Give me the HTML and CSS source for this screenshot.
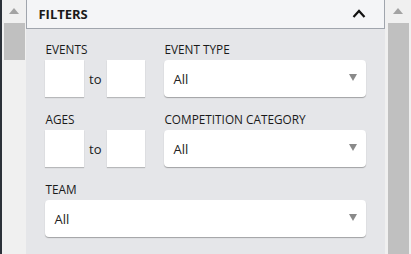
FILE: index.html
```html
<!DOCTYPE html>
<html lang="en">
<head>
    <meta charset="UTF-8" />
    <meta name="viewport" content="width=device-width, initial-scale=1.0" />
    <title>Filters</title>
    <link rel="stylesheet" href="styles.css">
</head>
<body>
    <div class="edge"></div>
    <div class="scrollbar left">
        <span class="arrow-up"></span>
        <div class="thumb short"></div>
    </div>

    <div class="panel">
        <div class="panel-header">
            <h2>FILTERS</h2>
            <svg class="chevron" width="14" height="9" viewBox="0 0 14 9">
                <path d="M1.5 8 L7 2 L12.5 8" fill="none" stroke="#111" stroke-width="2.2" />
            </svg>
        </div>

        <div class="panel-body">
            <div class="row">
                <div class="field">
                    <label>EVENTS</label>
                    <div class="range">
                        <div class="num-box"></div>
                        <span class="to">to</span>
                        <div class="num-box"></div>
                    </div>
                </div>
                <div class="field">
                    <label>EVENT TYPE</label>
                    <div class="select">All<span class="caret"></span></div>
                </div>
            </div>

            <div class="row">
                <div class="field">
                    <label>AGES</label>
                    <div class="range">
                        <div class="num-box"></div>
                        <span class="to">to</span>
                        <div class="num-box"></div>
                    </div>
                </div>
                <div class="field">
                    <label>COMPETITION CATEGORY</label>
                    <div class="select">All<span class="caret"></span></div>
                </div>
            </div>

            <div class="row single">
                <div class="field">
                    <label>TEAM</label>
                    <div class="select">All<span class="caret"></span></div>
                </div>
            </div>
        </div>
    </div>

    <div class="scrollbar right">
        <span class="arrow-up"></span>
        <div class="thumb long"></div>
    </div>
</body>
</html>
```

FILE: styles.css
```css
* {
    margin: 0;
    box-sizing: border-box;
}
body {
    display: flex;
    height: 254px;
    overflow: hidden;
    background: rgb(240, 240, 240);
    font-family: "Open Sans", "Noto Sans", sans-serif;
    color: rgb(26, 26, 26);
}
.edge {
    width: 2px;
    background: rgb(43, 49, 57);
}
.scrollbar {
    display: flex;
    flex-direction: column;
    align-items: center;
    background: rgb(240, 240, 240);
}
.scrollbar.left {
    width: 25px;
}
.scrollbar.right {
    width: 26px;
    padding-left: 2px;
    padding-right: 2px;
}
.arrow-up {
    width: 0;
    height: 0;
    margin-top: 8px;
    border-left: 5px solid transparent;
    border-right: 5px solid transparent;
    border-bottom: 6px solid rgb(163, 163, 163);
}
.thumb {
    margin-top: 9px;
    background: rgb(192, 192, 192);
}
.thumb.short {
    width: 21px;
    height: 37px;
}
.thumb.long {
    width: 21px;
    flex: 1;
}
.panel {
    width: 359px;
    display: flex;
    flex-direction: column;
    background: rgb(229, 230, 233);
}
.panel-header {
    height: 29px;
    display: flex;
    align-items: center;
    justify-content: space-between;
    padding: 0 18px 0 11px;
    background: rgb(244, 245, 247);
    border-left: 1px solid rgb(160, 165, 173);
    border-right: 1px solid rgb(160, 165, 173);
    border-bottom: 1px solid rgb(160, 165, 173);
}
.panel-header h2 {
    font-size: 13px;
    font-weight: 700;
}
.chevron {
    display: block;
    margin-top: -1px;
}
.panel-body {
    display: flex;
    flex-direction: column;
    gap: 15px;
    padding: 13px 19px 0 19px;
}
.row {
    display: grid;
    grid-template-columns: 100px 202px;
    column-gap: 19px;
}
.row.single {
    grid-template-columns: 321px;
}
.field label {
    display: block;
    font-size: 11.8px;
    line-height: 14px;
    margin-bottom: 4px;
}
.range {
    display: flex;
    align-items: center;
}
.num-box {
    width: 39px;
    height: 37px;
    background: white;
    box-shadow: 0 1px 1px rgba(0, 0, 0, 0.2);
}
.to {
    width: 23px;
    padding-left: 5px;
    font-size: 13px;
}
.select {
    position: relative;
    height: 37px;
    display: flex;
    align-items: center;
    padding-left: 9px;
    background: white;
    border-radius: 4px;
    box-shadow: 0 1px 1px rgba(0, 0, 0, 0.3);
    font-size: 13px;
    color: rgb(34, 34, 34);
}
.caret {
    position: absolute;
    right: 9px;
    top: 14px;
    width: 0;
    height: 0;
    border-left: 4px solid transparent;
    border-right: 4px solid transparent;
    border-top: 7px solid rgb(138, 138, 138);
}
```
